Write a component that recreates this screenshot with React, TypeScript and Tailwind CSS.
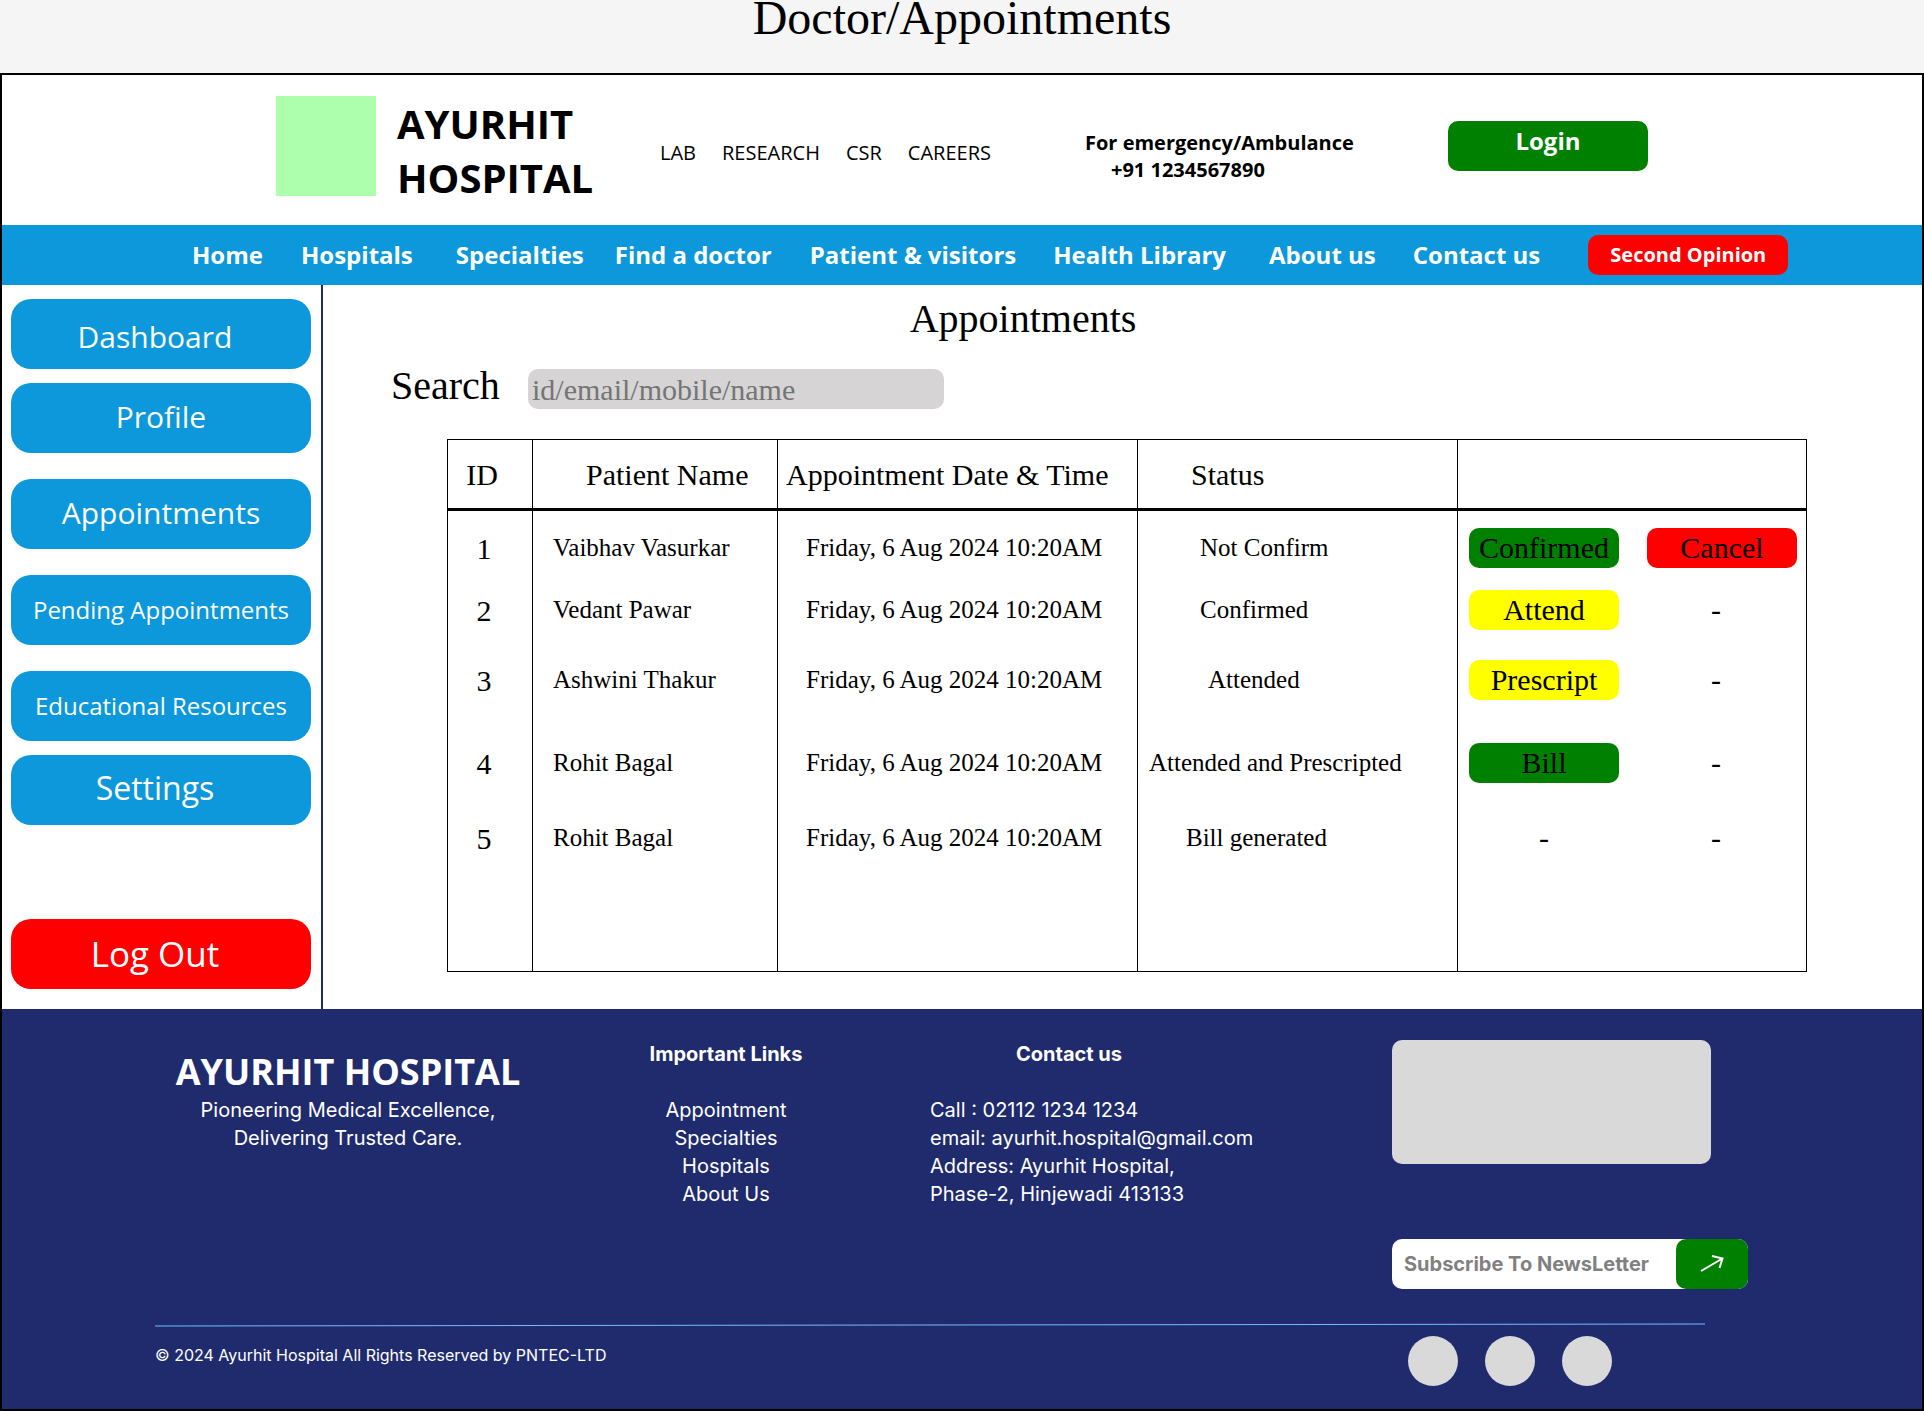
import React from "react";

const topLinks = ["LAB", "RESEARCH", "CSR", "CAREERS"];

const navLinks = [
  { label: "Home", space: "" },
  { label: "Hospitals", space: "ml-[38px]" },
  { label: "Specialties", space: "ml-[43px]" },
  { label: "Find a doctor", space: "ml-[31px]" },
  { label: "Patient & visitors", space: "ml-[38px]" },
  { label: "Health Library", space: "ml-[37px]" },
  { label: "About us", space: "ml-[43px]" },
  { label: "Contact us", space: "ml-[37px]" },
];

const sideLinks = [
  { label: "Dashboard", style: "pt-1 pr-3 text-[30px]" },
  { label: "Profile", style: "mt-3.5 pb-1 text-[30px]" },
  { label: "Appointments", style: "mt-[26px] pb-1 text-[30px]" },
  { label: "Pending Appointments", style: "mt-[26px] text-2xl" },
  { label: "Educational Resources", style: "mt-[26px] text-2xl" },
  { label: "Settings", style: "mt-3.5 pr-3 pb-1 text-[32px]" },
];

type Action = { label: string; color: string } | null;

const confirm: Action = { label: "Confirmed", color: "bg-[#008000]" };
const cancel: Action = { label: "Cancel", color: "bg-[#ff0000]" };
const attend: Action = { label: "Attend", color: "bg-[#ffff00]" };
const prescript: Action = { label: "Prescript", color: "bg-[#ffff00]" };
const bill: Action = { label: "Bill", color: "bg-[#008000]" };

const rows: {
  id: number;
  name: string;
  status: string;
  indent: string;
  height: string;
  actions: Action[];
}[] = [
  { id: 1, name: "Vaibhav Vasurkar", status: "Not Confirm", indent: "pl-[62px]", height: "h-[74px]", actions: [confirm, cancel] },
  { id: 2, name: "Vedant Pawar", status: "Confirmed", indent: "pl-[62px]", height: "h-[50px]", actions: [attend, null] },
  { id: 3, name: "Ashwini Thakur", status: "Attended", indent: "pl-[70px]", height: "h-[90px]", actions: [prescript, null] },
  { id: 4, name: "Rohit Bagal", status: "Attended and Prescripted", indent: "pl-[11px]", height: "h-[76px]", actions: [bill, null] },
  { id: 5, name: "Rohit Bagal", status: "Bill generated", indent: "pl-12", height: "h-[74px]", actions: [null, null] },
];

const date = "Friday, 6 Aug 2024 10:20AM";

function Header() {
  return (
    <header className="flex h-[150px] pl-[274px]">
      <div className="mt-[21px] size-[100px] shrink-0 bg-[#adffad]" />
      <div className="mt-[22px] w-[263px] pl-[21px] text-[40px] leading-[54px] font-bold">
        AYURHIT
        <br />
        HOSPITAL
      </div>
      <nav aria-label="Departments" className="mt-16 flex w-[426px] gap-[26px] pl-[21px] text-xl leading-7">
        {topLinks.map((l) => (
          <a key={l} href="#">
            {l}
          </a>
        ))}
      </nav>
      <div className="mt-[54px] w-[383px] pl-5 text-xl leading-[27px] font-bold">
        <p>For emergency/Ambulance</p>
        <p className="pl-[26px]">+91 1234567890</p>
      </div>
      <button className="mt-[46px] flex h-[50px] w-[200px] items-start justify-center rounded-[10px] bg-[#008000] pt-1 text-2xl leading-8 font-bold text-white">
        Login
      </button>
    </header>
  );
}

function NavBar() {
  return (
    <nav aria-label="Main" className="flex h-[60px] items-center bg-[#0c98da] pl-[190px] text-2xl font-bold whitespace-nowrap text-white">
      {navLinks.map((l) => (
        <a key={l.label} href="#" className={l.space}>
          {l.label}
        </a>
      ))}
      <button className="ml-12 h-10 w-[200px] rounded-[10px] bg-[#ff0000] text-xl">Second Opinion</button>
    </nav>
  );
}

function Sidebar() {
  return (
    <aside className="flex w-[321px] shrink-0 flex-col border-r-2 border-[#202b6d] pt-3.5 pr-2.5 pb-5 pl-[9px] text-white">
      {sideLinks.map((l) => (
        <button key={l.label} className={`h-[70px] rounded-[20px] bg-[#0c98da] ${l.style}`}>
          {l.label}
        </button>
      ))}
      <button className="mt-auto h-[70px] rounded-[20px] bg-[#ff0000] pr-3 text-[35px]">Log Out</button>
    </aside>
  );
}

function AppointmentsTable() {
  return (
    <table className="w-full table-fixed border-separate border-spacing-0 border border-black text-left text-[25px]">
      <colgroup>
        <col className="w-[84px]" />
        <col className="w-[245px]" />
        <col className="w-[360px]" />
        <col className="w-[320px]" />
        <col />
      </colgroup>
      <thead className="text-[30px]">
        <tr className="h-[71px]">
          <th className="border-b-[3px] border-black pr-4 text-center font-normal">ID</th>
          <th className="border-b-[3px] border-l border-black pl-[53px] font-normal">Patient Name</th>
          <th className="border-b-[3px] border-l border-black pl-2 font-normal">Appointment Date &amp; Time</th>
          <th className="border-b-[3px] border-l border-black pl-[53px] font-normal">Status</th>
          <th aria-label="Actions" className="border-b-[3px] border-l border-black" />
        </tr>
      </thead>
      <tbody>
        {rows.map((r) => (
          <tr key={r.id} className={r.height}>
            <td className="pr-3 text-center text-[30px]">{r.id}</td>
            <td className="border-l border-black pl-5">{r.name}</td>
            <td className="border-l border-black pl-7">{date}</td>
            <td className={`border-l border-black whitespace-nowrap ${r.indent}`}>{r.status}</td>
            <td className="border-l border-black pl-[11px] text-[30px]">
              <div className="flex gap-7">
                {r.actions.map((a, i) =>
                  a ? (
                    <button key={i} className={`h-10 w-[150px] rounded-[10px] leading-10 ${a.color}`}>
                      {a.label}
                    </button>
                  ) : (
                    <span key={i} className="w-[150px] text-center leading-10 last:pr-3">
                      -
                    </span>
                  ),
                )}
              </div>
            </td>
          </tr>
        ))}
        <tr className="h-24">
          <td />
          <td className="border-l border-black" />
          <td className="border-l border-black" />
          <td className="border-l border-black" />
          <td className="border-l border-black" />
        </tr>
      </tbody>
    </table>
  );
}

function Footer() {
  return (
    <footer className="bg-[#202b6d] pt-[31px] pb-[23px] pl-[153px] font-[Inter,sans-serif] text-xl leading-7 text-white">
      <div className="grid grid-cols-[386px_370px_481px_1fr]">
        <div className="pt-2 text-center">
          <h2 className="font-['Open_Sans',sans-serif] text-4xl leading-[48px] font-bold">AYURHIT HOSPITAL</h2>
          <p>
            Pioneering Medical Excellence,
            <br />
            Delivering Trusted Care.
          </p>
        </div>
        <div className="text-center">
          <h3 className="mb-7 font-bold">Important Links</h3>
          <ul>
            {["Appointment", "Specialties", "Hospitals", "About Us"].map((l) => (
              <li key={l}>
                <a href="#">{l}</a>
              </li>
            ))}
          </ul>
        </div>
        <div className="pl-[19px]">
          <h3 className="mb-7 pl-[86px] font-bold">Contact us</h3>
          <address className="not-italic">
            <p>Call : 02112 1234 1234</p>
            <p>email: ayurhit.hospital@gmail.com</p>
            <p>Address: Ayurhit Hospital,</p>
            <p>Phase-2, Hinjewadi 413133</p>
          </address>
        </div>
        <div>
          <div className="h-[124px] w-[319px] rounded-[10px] bg-[#d9d9d9]" />
          <form className="mt-[75px] flex h-[50px] w-[356px] rounded-[10px] bg-white" onSubmit={(e) => e.preventDefault()}>
            <input
              type="email"
              aria-label="Subscribe To NewsLetter"
              placeholder="Subscribe To NewsLetter"
              className="min-w-0 flex-1 pl-3 font-bold text-black outline-none placeholder:text-[#808080]"
            />
            <button aria-label="Subscribe" className="flex w-[72px] items-center justify-center rounded-[10px] bg-[#008000]">
              <svg width="26" height="20" viewBox="0 0 26 20" fill="none" stroke="white" strokeWidth="2">
                <path d="M2 17L23.5 4.500M13 2L23.500 4.500L20.500 14" />
              </svg>
            </button>
          </form>
        </div>
      </div>
      <svg className="mt-[34px] block h-1 w-[1550px] max-w-full" viewBox="0 0 1550 4" preserveAspectRatio="none">
        <line x1="0" y1="3" x2="1550" y2="1" stroke="#74bcff" strokeWidth="1" />
      </svg>
      <div className="mt-[9px] flex items-start">
        <p className="w-[1253px] pt-[7px] text-base leading-6">© 2024 Ayurhit Hospital All Rights Reserved by PNTEC-LTD</p>
        <div className="flex gap-[27px]">
          <a href="#" aria-label="Facebook" className="size-[50px] rounded-full bg-[#d9d9d9]" />
          <a href="#" aria-label="Twitter" className="size-[50px] rounded-full bg-[#d9d9d9]" />
          <a href="#" aria-label="Instagram" className="size-[50px] rounded-full bg-[#d9d9d9]" />
        </div>
      </div>
    </footer>
  );
}

export default function App() {
  return (
    <div className="bg-[#f5f5f5] font-['Open_Sans',sans-serif] text-black">
      <h1 className="h-[73px] text-center font-['Liberation_Serif',serif] text-5xl leading-9">Doctor/Appointments</h1>
      <div className="border-2 border-black bg-white">
        <Header />
        <NavBar />
        <div className="flex">
          <Sidebar />
          <main className="flex-1 pt-2.5 pr-[115px] pb-[37px] pl-[124px] font-['Liberation_Serif',serif]">
            <h2 className="pr-[208px] text-center text-[40px] leading-[48px]">Appointments</h2>
            <div className="mt-5 -ml-14 flex items-end">
              <label htmlFor="search" className="w-[137px] text-[40px] leading-[46px]">
                Search
              </label>
              <input
                id="search"
                type="text"
                placeholder="id/email/mobile/name"
                className="h-10 w-[416px] rounded-[10px] bg-[#d6d4d4] pl-1 text-[30px] outline-none placeholder:text-[#757575]"
              />
            </div>
            <div className="mt-[30px]">
              <AppointmentsTable />
            </div>
          </main>
        </div>
        <Footer />
      </div>
    </div>
  );
}
